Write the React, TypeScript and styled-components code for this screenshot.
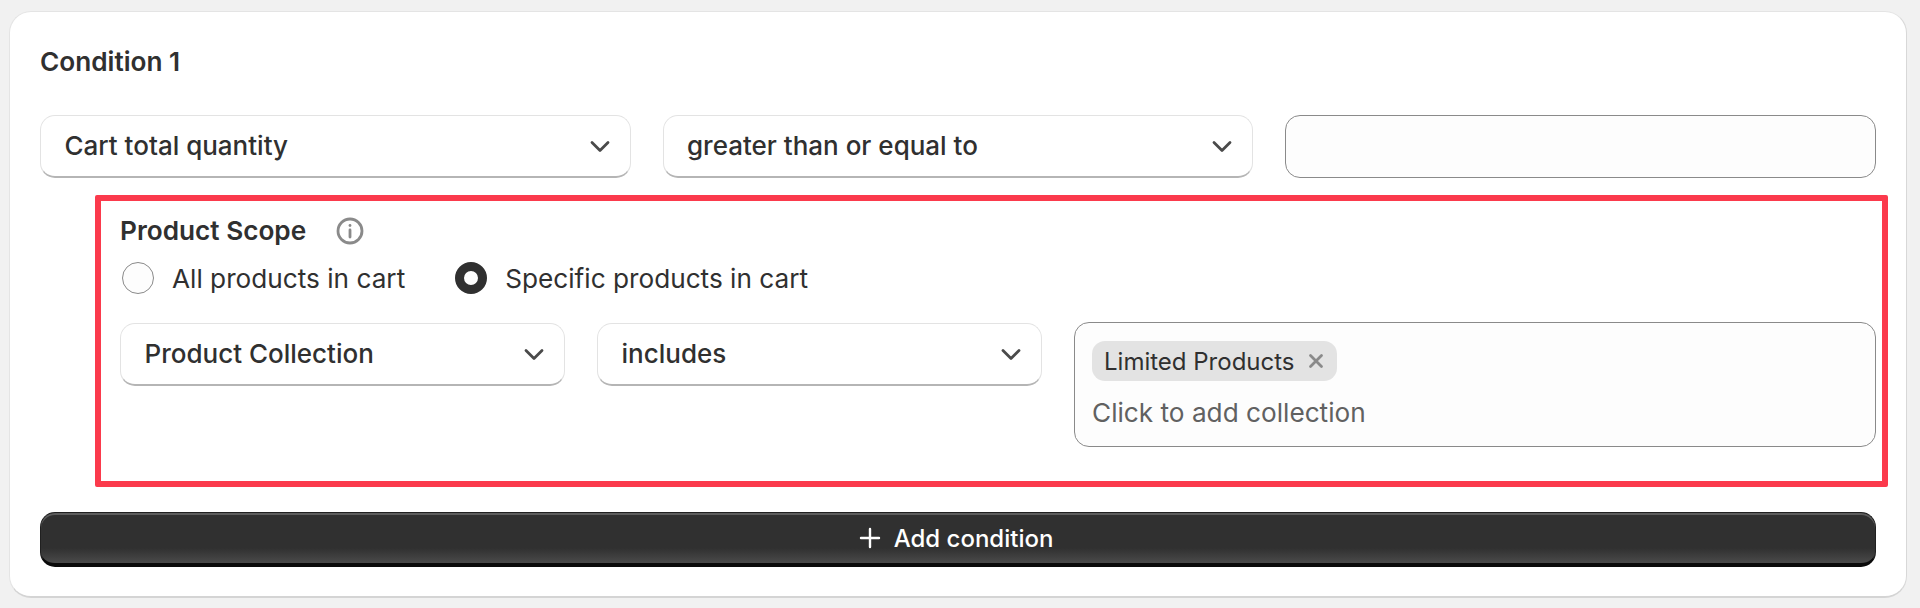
import styled, { createGlobalStyle } from "styled-components";

const GlobalStyle = createGlobalStyle`
  html, body {
    margin: 0;
    background: #f1f1f1;
    font-family: Inter, "Liberation Sans", sans-serif;
    color: #303030;
  }
`;

const Page = styled.div`
  box-sizing: border-box;
  width: 1920px;
  height: 608px;
  padding: 11px 13px 10px 9px;
  overflow: hidden;
`;

const Card = styled.section`
  box-sizing: border-box;
  height: 587px;
  padding: 0 30px;
  background: #fff;
  border: 1px solid #e4e4e4;
  border-right-color: #d8d8d8;
  border-bottom: 2px solid #d4d4d4;
  border-radius: 22px;
`;

const Title = styled.h2`
  margin: 0;
  padding-top: 32px;
  height: 103px;
  box-sizing: border-box;
  font-size: 26.2px;
  line-height: 36px;
  font-weight: 600;
`;

const TopRow = styled.div`
  display: grid;
  grid-template-columns: 590.5px 590.5px 591px;
  column-gap: 32px;
  height: 63px;
`;

const SelectBox = styled.button`
  box-sizing: border-box;
  height: 63px;
  padding: 0 19px 1px 23.5px;
  display: flex;
  align-items: center;
  justify-content: space-between;
  background: #fff;
  border: 1px solid #e3e3e3;
  border-bottom: 2px solid #b5b5b5;
  border-radius: 15px;
  font-family: inherit;
  font-size: 26px;
  font-weight: 500;
  color: #303030;
  text-align: left;
`;

const TextInput = styled.input`
  box-sizing: border-box;
  width: 100%;
  height: 63px;
  background: #fdfdfd;
  border: 1px solid #8a8a8a;
  border-radius: 15px;
`;

const ScopeBox = styled.div`
  box-sizing: border-box;
  height: 292px;
  margin: 17px -12px 0 55px;
  padding: 15px 6px 0 19px;
  border: 6px solid #fb3a4c;
  border-radius: 2px;
`;

const ScopeHeader = styled.div`
  display: flex;
  align-items: center;
  gap: 30px;
  height: 30px;
`;

const ScopeTitle = styled.span`
  font-size: 26.2px;
  line-height: 30px;
  font-weight: 600;
`;

const RadioRow = styled.div`
  display: flex;
  align-items: center;
  gap: 50px;
  margin: 16px 0 0 2px;
  height: 32px;
`;

const RadioLabel = styled.label`
  display: flex;
  align-items: center;
  gap: 18px;
  font-size: 26.2px;
`;

const RadioDot = styled.span<{ $checked?: boolean }>`
  box-sizing: border-box;
  width: 32px;
  height: 32px;
  border-radius: 50%;
  background: #fdfdfd;
  border: ${(p) => (p.$checked ? "9px solid #303030" : "1px solid #8a8a8a")};
`;

const FilterRow = styled.div`
  display: grid;
  grid-template-columns: 445px 445px 1fr;
  column-gap: 32px;
  margin-top: 29px;
  align-items: start;
`;

const TagsBox = styled.div`
  box-sizing: border-box;
  height: 125px;
  margin-top: -1px;
  padding: 18px 17px 0;
  background: #fdfdfd;
  border: 1px solid #8a8a8a;
  border-radius: 15px;
`;

const Chip = styled.span`
  display: inline-flex;
  align-items: center;
  gap: 13px;
  box-sizing: border-box;
  height: 40px;
  padding: 0 13px 0 12px;
  background: #e3e3e3;
  border-radius: 13px;
  font-size: 24px;
`;

const Placeholder = styled.div`
  margin-top: 16px;
  font-size: 26.2px;
  line-height: 32px;
  color: #616161;
`;

const AddButton = styled.button`
  box-sizing: border-box;
  width: 100%;
  height: 55px;
  margin-top: 25px;
  padding: 0 4px 0 0;
  display: flex;
  align-items: center;
  justify-content: center;
  gap: 13px;
  border: 1px solid #202020;
  border-bottom: 4px solid #0a0a0a;
  border-radius: 15px;
  background: linear-gradient(#303030 0, #303030 70%, #4a4a4a 100%);
  box-shadow: inset 0 2px 0 #5c5c5c;
  color: #fff;
  font-family: inherit;
  font-size: 24px;
  font-weight: 500;
`;

const Chevron = () => (
  <svg width="22" height="14" viewBox="0 0 22 14" fill="none" stroke="#4a4a4a" strokeWidth="2.8" strokeLinecap="round" strokeLinejoin="round">
    <path d="M3 3.5l8 8 8-8" />
  </svg>
);

const InfoIcon = () => (
  <svg width="28" height="28" viewBox="0 0 28 28" fill="none" stroke="#8a8a8a" strokeWidth="2.8" strokeLinecap="round">
    <circle cx="14" cy="14" r="12" />
    <path d="M14 13v7" />
    <circle cx="14" cy="8.5" r="1.4" fill="#8a8a8a" stroke="none" />
  </svg>
);

const CloseIcon = () => (
  <svg width="16" height="16" viewBox="0 0 16 16" fill="none" stroke="#8a8a8a" strokeWidth="2.8" strokeLinecap="round">
    <path d="M2.5 2.5l11 11M13.5 2.5l-11 11" />
  </svg>
);

const PlusIcon = () => (
  <svg width="22" height="22" viewBox="0 0 22 22" fill="none" stroke="#fff" strokeWidth="2.4" strokeLinecap="round">
    <path d="M11 2v18M2 11h18" />
  </svg>
);

export default function App() {
  return (
    <Page>
      <GlobalStyle />
      <Card>
        <Title>Condition 1</Title>
        <TopRow>
          <SelectBox>
            Cart total quantity
            <Chevron />
          </SelectBox>
          <SelectBox>
            greater than or equal to
            <Chevron />
          </SelectBox>
          <TextInput />
        </TopRow>
        <ScopeBox>
          <ScopeHeader>
            <ScopeTitle>Product Scope</ScopeTitle>
            <InfoIcon />
          </ScopeHeader>
          <RadioRow>
            <RadioLabel>
              <RadioDot />
              All products in cart
            </RadioLabel>
            <RadioLabel>
              <RadioDot $checked />
              Specific products in cart
            </RadioLabel>
          </RadioRow>
          <FilterRow>
            <SelectBox>
              Product Collection
              <Chevron />
            </SelectBox>
            <SelectBox>
              includes
              <Chevron />
            </SelectBox>
            <TagsBox>
              <Chip>
                Limited Products
                <CloseIcon />
              </Chip>
              <Placeholder>Click to add collection</Placeholder>
            </TagsBox>
          </FilterRow>
        </ScopeBox>
        <AddButton>
          <PlusIcon />
          Add condition
        </AddButton>
      </Card>
    </Page>
  );
}
